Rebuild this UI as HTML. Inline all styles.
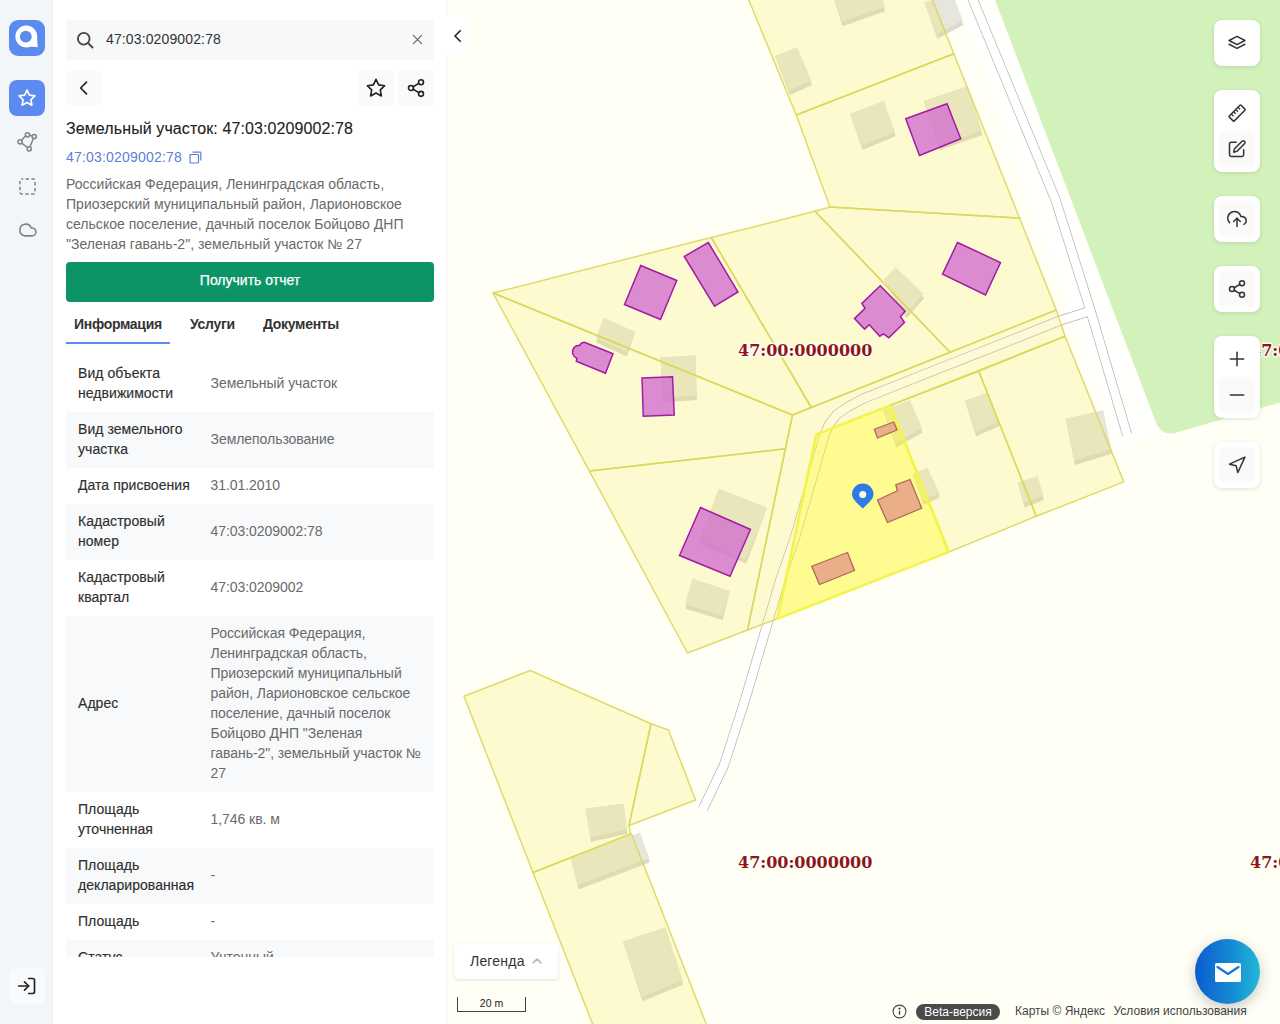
<!DOCTYPE html>
<html lang="ru">
<head>
<meta charset="utf-8">
<title>Земельный участок: 47:03:0209002:78</title>
<style>
*{box-sizing:border-box;margin:0;padding:0}
html,body{width:1280px;height:1024px;overflow:hidden;background:#fffff6;font-family:"Liberation Sans",sans-serif;color:#333}
#map{position:absolute;left:0;top:0;width:1280px;height:1024px;display:block}
#nav{position:absolute;left:0;top:0;width:53px;height:1024px;background:#f3f6f9;border-right:1px solid #ebeff4}
#panel{position:absolute;left:53px;top:0;width:393px;height:1024px;background:#fff;box-shadow:1px 0 2px rgba(0,0,0,.06)}
.abs{position:absolute}
.logo{left:9px;top:20px;width:36px;height:36px;border-radius:9px;background:#5b8bf0}
.navact{left:9px;top:80px;width:36px;height:36px;border-radius:8px;background:#5b8bf0}
.search{left:13px;top:20px;width:368px;height:40px;background:#f7f8fa;border-radius:3px}
.search span{position:absolute;left:40px;top:10px;font-size:14px;line-height:18px;color:#333;letter-spacing:.13px}
.sqbtn{width:36px;height:36px;background:#fafafa;border-radius:6px}
h1{position:absolute;left:13px;top:118px;font-size:16px;line-height:22px;font-weight:400;color:#222;white-space:nowrap;-webkit-text-stroke:.1px #222;letter-spacing:.1px}
.cn{left:13px;top:148px;font-size:14px;line-height:18px;color:#5c7fd6;white-space:nowrap;letter-spacing:.2px}
.addr{left:13px;top:173.6px;width:372px;font-size:14px;line-height:20px;color:#6a6a6a;white-space:nowrap;letter-spacing:.02px}
.btn{left:13px;top:262px;width:368px;height:39.5px;border-radius:4px;background:#0c9467;color:#fff;font-size:14px;line-height:37px;text-align:center;-webkit-text-stroke:.25px #fff}
.tabs{left:13px;top:306px;height:38px;white-space:nowrap}
.tab{position:absolute;top:9px;font-size:14px;line-height:18px;font-weight:700;color:#333;letter-spacing:-.3px}
.tabline{left:13px;top:342px;width:104px;height:2px;background:#5b8bf0}
#tbl{position:absolute;left:13px;top:356px;width:368px;height:601px;overflow:hidden}
.r{position:relative;width:368px}
.r.g{background:#f8f9fa}
.r .l{position:absolute;left:12px;font-size:14px;line-height:20px;color:#2f2f2f;white-space:nowrap;-webkit-text-stroke:.15px #2f2f2f;letter-spacing:.05px;margin-top:-.6px}
.r .v{position:absolute;left:144.5px;font-size:14px;line-height:20px;color:#6a6a6a;white-space:nowrap;letter-spacing:-.05px;margin-top:-.6px}
.h2{height:56px}.h1{height:36px}.h8{height:176px}
.collapse{left:446px;top:16px;width:23px;height:39px;background:#fff;border-radius:0 4px 4px 0}
</style>
</head>
<body>
<svg id="map" viewBox="0 0 1280 1024" width="1280" height="1024">
<style>
.pc{fill:#fae438;fill-opacity:.2;stroke:none}
.pl{fill:none;stroke:#dcd75c;stroke-opacity:.9;stroke-width:1.5;stroke-linejoin:round}
.sel{fill:#ffff00;fill-opacity:.3;stroke:#f3f54a;stroke-width:2.4;stroke-linejoin:round}
.mg{fill:#d271d0;fill-opacity:.8;stroke:#a21ba4;stroke-width:1.5;stroke-linejoin:miter}
.og{fill:#e8a888;fill-opacity:.92;stroke:#ae6656;stroke-width:1.3}
.bs{fill:#dadad0}
.bt{fill:#e6e6dc}
.rg{fill:none;stroke:#b3b4bb;stroke-width:10;stroke-linejoin:round}
.rw{fill:none;stroke:#fff;stroke-width:8.6;stroke-linejoin:round}
.rl{fill:none;stroke:#b4b5bb;stroke-width:.8;stroke-linejoin:round}
.lbl{font-family:"DejaVu Serif",serif;font-weight:700;font-size:16px;fill:#8c1717;stroke:#fff;stroke-opacity:.85;stroke-width:3px;paint-order:stroke;stroke-linejoin:round;letter-spacing:0}
</style>
<rect width="1280" height="1024" fill="#fffff6"/>
<polyline points="985,-10 1147,440" fill="none" stroke="#fffffc" stroke-width="60"/>
<path d="M991.2,-10 L1155.8,422 Q1161.5,436.9 1176.9,432.4 L1290,399.6 L1290,-10 Z" fill="#d3f1ba"/>
<polyline points="971,-5 1055.6,200 1090,309 1127.2,435" class="rg" />
<polyline points="1090,311 1061,320.25 940,368.1 863.75,398.4 848.5,406.5 836.25,415 829,424.5 824.5,435 810.5,483.5 795,537.5 780.3,580 762.6,640 745,700 724,765 702.8,809.4" class="rg" />
<polyline points="971,-5 1055.6,200 1090,309 1127.2,435 1127.8,437" class="rw" />
<polyline points="1090,311 1061,320.25 940,368.1 863.75,398.4 848.5,406.5 836.25,415 829,424.5 824.5,435 810.5,483.5 795,537.5 780.3,580 762.6,640 745,700 724,765 702.8,809.4 702.2,810.6" class="rw" />
<polygon points="832.5,-6 881.25,-6 885,11.25 842.5,26.25" class="bs" />
<polygon points="832.5,-6 881.25,-6 884.5,6.75 842,21.75" class="bt" />
<polygon points="775,56.25 797,47.5 812,85 790,95" class="bs" />
<polygon points="775,56.25 797,47.5 811.5,80.5 789.5,90.5" class="bt" />
<polygon points="924.5,2.5 952.5,-6 963.25,25 937.5,38.75" class="bs" />
<polygon points="924.5,2.5 952.5,-6 962.75,20.5 937,34.25" class="bt" />
<polygon points="850,113.75 883.75,101.25 895.5,136.25 862.5,150" class="bs" />
<polygon points="850,113.75 883.75,101.25 895,131.75 862,145.5" class="bt" />
<polygon points="923.75,101.25 967.5,86.25 982.5,135 940,150" class="bs" />
<polygon points="923.75,101.25 967.5,86.25 982,130.5 939.5,145.5" class="bt" />
<polygon points="603.75,318 635,332 627,356.5 596.25,342.5" class="bs" />
<polygon points="603.75,318 635,332 626.5,352 595.75,338" class="bt" />
<polygon points="660.5,357.5 695.5,355.5 697,400 663,402.5" class="bs" />
<polygon points="660.5,357.5 695.5,355.5 696.5,395.5 662.5,398" class="bt" />
<polygon points="884.1,279.5 895.9,267.8 924,298.3 906.4,318.6" class="bs" />
<polygon points="884.1,279.5 895.9,267.8 923.5,293.8 905.9,314.1" class="bt" />
<polygon points="883.1,410 910,400.6 922.5,432.5 896.25,447.5" class="bs" />
<polygon points="883.1,410 910,400.6 922,428 895.75,443" class="bt" />
<polygon points="965,401 987,393 999.5,426 976.25,436.25" class="bs" />
<polygon points="965,401 987,393 999,421.5 975.75,431.75" class="bt" />
<polygon points="912.5,473.75 927.5,468 940,497.5 923.75,505" class="bs" />
<polygon points="912.5,473.75 927.5,468 939.5,493 923.25,500.5" class="bt" />
<polygon points="1018,482.5 1037.5,476.25 1043.75,500 1024.4,507.5" class="bs" />
<polygon points="1018,482.5 1037.5,476.25 1043.25,495.5 1023.9,503" class="bt" />
<polygon points="1065.6,418.75 1103,410.6 1111.9,453.75 1075,465" class="bs" />
<polygon points="1065.6,418.75 1103,410.6 1111.4,449.25 1074.5,460.5" class="bt" />
<polygon points="718.75,488.75 767,508 746.25,563.75 700,543.75" class="bs" />
<polygon points="718.75,488.75 767,508 745.75,559.25 699.5,539.25" class="bt" />
<polygon points="692.5,578.75 730,591.25 722.5,620 685.5,608.75" class="bs" />
<polygon points="692.5,578.75 730,591.25 722,615.5 685,604.25" class="bt" />
<polygon points="585.5,808.75 623.5,803.75 627.25,833.75 591,842" class="bs" />
<polygon points="585.5,808.75 623.5,803.75 626.75,829.25 590.5,837.5" class="bt" />
<polygon points="571,858.75 639.75,832.5 649.75,862.5 578.5,889.5" class="bs" />
<polygon points="571,858.75 639.75,832.5 649.25,858 578,885" class="bt" />
<polygon points="623.1,941.5 665.4,927.6 683.3,984.4 642.4,1001.3" class="bs" />
<polygon points="623.1,941.5 665.4,927.6 682.8,979.9 641.9,996.8" class="bt" />
<polygon points="746.3,-6 930.1,-6 953.75,53.75 796.25,115" class="pc" />
<polygon points="796.25,115 953.75,53.75 1019.5,218 830,207" class="pc" />
<polygon points="815,211.25 830,207 1019.5,218 1056.25,310 950,352.3" class="pc" />
<polygon points="711.25,237.5 815,211.25 950,352.3 811.25,407.5" class="pc" />
<polygon points="493,293 711.25,237.5 811.25,407.5 792.5,415" class="pc" />
<polygon points="493,293 792.5,415 785.4,448.75 589.3,470.9" class="pc" />
<polygon points="589.3,470.9 785.4,448.75 747.5,630 687.5,653" class="pc" />
<polygon points="792.5,415 1056.25,310 1065,336.25 890,405.5 816.25,434.5 777.5,618.75 747.5,630" class="pc" />
<polygon points="890,405.5 978.75,371.25 1036.25,516.25 948.75,552" class="pc" />
<polygon points="978.75,371.25 1065,336.25 1123.75,481.9 1036.25,516.25" class="pc" />
<polygon points="464,696.25 530.25,670.5 651,723.75 629,825.5 630.5,834 533,872.5" class="pc" />
<polygon points="651,723.75 668.5,730 695.5,800 629,825.5" class="pc" />
<polygon points="533,872.5 631.5,834 712.5,1040 598.9,1040" class="pc" />
<polygon points="890,405.5 948.75,552 777.5,618.75 816.25,434.5" class="pc" />
<polygon points="890,405.5 948.75,552 777.5,618.75 816.25,434.5" class="sel" />
<polygon points="746.3,-6 930.1,-6 953.75,53.75 796.25,115" class="pl" />
<polygon points="796.25,115 953.75,53.75 1019.5,218 830,207" class="pl" />
<polygon points="815,211.25 830,207 1019.5,218 1056.25,310 950,352.3" class="pl" />
<polygon points="711.25,237.5 815,211.25 950,352.3 811.25,407.5" class="pl" />
<polygon points="493,293 711.25,237.5 811.25,407.5 792.5,415" class="pl" />
<polygon points="493,293 792.5,415 785.4,448.75 589.3,470.9" class="pl" />
<polygon points="589.3,470.9 785.4,448.75 747.5,630 687.5,653" class="pl" />
<polygon points="792.5,415 1056.25,310 1065,336.25 890,405.5 816.25,434.5 777.5,618.75 747.5,630" class="pl" />
<polygon points="890,405.5 978.75,371.25 1036.25,516.25 948.75,552" class="pl" />
<polygon points="978.75,371.25 1065,336.25 1123.75,481.9 1036.25,516.25" class="pl" />
<polygon points="464,696.25 530.25,670.5 651,723.75 629,825.5 630.5,834 533,872.5" class="pl" />
<polygon points="651,723.75 668.5,730 695.5,800 629,825.5" class="pl" />
<polygon points="533,872.5 631.5,834 712.5,1040 598.9,1040" class="pl" />
<polygon points="890,405.5 948.75,552 777.5,618.75 816.25,434.5" class="sel" style="fill:none"/>
<polygon points="640.75,265.5 676.75,280.5 660.5,319.5 624.5,304.5" class="mg" />
<polygon points="708.25,242.5 738,292 714.5,306.25 684.25,256.5" class="mg" />
<polygon points="642,378 672.5,376.75 674.25,415 643.25,416.25" class="mg" />
<polygon points="905.75,118.75 947,103.75 960.75,138.75 919.5,155.5" class="mg" />
<polygon points="957.5,242.5 1000.5,262.5 985.5,295 942.5,274.25" class="mg" />
<polygon points="700.5,507.5 750.5,529.5 730,576.25 679.5,555.5" class="mg" />
<polygon points="880.2,285.8 905.2,311.2 900.5,316.6 904.5,322.5 888.8,337.7 883.4,333.8 879.8,336.2 869.3,324.8 864.6,329.1 854.5,318.6 865,308.4 861.9,303.4" class="mg" />
<path d="M584.25,342.25 L613,353.75 L605.5,373.25 L576.25,361.25 L577,358.5 Q571.5,356 572.8,350 Q574.5,345 579.5,345.5 Q580.5,343 584.25,342.25 Z" class="mg"/>
<polygon points="874.25,429.25 893.75,422 897,430 877.5,438" class="og" />
<polygon points="877.5,500 897.5,490.75 895.75,485 910,479.5 921.75,508.25 887.5,522.5" class="og" />
<polygon points="811.75,566.25 847.5,552.5 854.5,570.5 819.5,584.5" class="og" />
<text x="738" y="355.6" class="lbl">47:00:0000000</text>
<text x="1250" y="355.6" class="lbl">47:00:0000000</text>
<text x="738" y="867.6" class="lbl">47:00:0000000</text>
<text x="1250" y="867.6" class="lbl">47:00:0000000</text>
<g transform="translate(862.75,494.5)"><path d="M0,14.3 C-3,10.5 -10.8,5.5 -10.8,-0.2 A10.8,10.8 0 1 1 10.8,-0.2 C10.8,5.5 3,10.5 0,14.3 Z" fill="#2f7be5"/><circle r="3.5" fill="#fffde0"/></g>
</svg>
<div id="nav">
  <div class="abs logo"><svg width="36" height="36" viewBox="0 0 36 36"><circle cx="17.3" cy="16.500" r="10.900" fill="#fff"/><path d="M27.800 14l.9 13.300-9.700-1z" fill="#fff"/><circle cx="16.800" cy="16.700" r="5.900" fill="#5b8bf0"/></svg></div>
  <div class="abs navact"><svg style="position:absolute;left:8px;top:8px" width="20" height="20" viewBox="0 0 24 24" fill="none" stroke="#fff" stroke-width="2" stroke-linejoin="round"><polygon points="12 2.500 14.900 8.600 21.500 9.500 16.700 14.100 17.900 20.700 12 17.500 6.100 20.700 7.300 14.100 2.500 9.500 9.100 8.600"/></svg></div>
  <svg class="abs" style="left:16px;top:131px" width="22" height="22" viewBox="0 0 22 22" fill="none" stroke="#7d828a" stroke-width="1.500"><circle cx="11.500" cy="3.800" r="2.100"/><circle cx="18.200" cy="5.500" r="2.100"/><circle cx="4" cy="10.800" r="2.100"/><circle cx="13.200" cy="17.800" r="2.100"/><path d="M9.600 4.800L5.600 9.300M13.500 4.300l2.700.7M17.400 7.500l-3.500 8.300M5.600 12.200l6 4.300"/></svg>
  <svg class="abs" style="left:19px;top:178px" width="17" height="17" viewBox="0 0 17 17" fill="none" stroke="#7d828a" stroke-width="1.500"><rect x="1" y="1" width="15" height="15" rx="1.500" stroke-dasharray="3.400 2.400" stroke-dashoffset="1.700"/></svg>
  <svg class="abs" style="left:17px;top:220px" width="20" height="20" viewBox="0 0 24 24" fill="none" stroke="#7d828a" stroke-width="1.900" stroke-linejoin="round"><path d="M18 10.500h-1A7 7 0 1 0 9.500 20H18a4.700 4.700 0 0 0 0-9.500z" transform="translate(0 -1)"/></svg>
  <div class="abs" style="left:9px;top:968px;width:36px;height:36px;border-radius:6px;background:#f8fafc"><svg style="position:absolute;left:8px;top:8px" width="20" height="20" viewBox="0 0 24 24" fill="none" stroke="#222" stroke-width="2" stroke-linecap="round" stroke-linejoin="round"><path d="M14 3h5a2 2 0 0 1 2 2v14a2 2 0 0 1-2 2h-5"/><polyline points="9 17 14 12 9 7"/><line x1="14" y1="12" x2="2" y2="12"/></svg></div>
</div>
<div id="panel">
  <div class="abs search"><svg style="position:absolute;left:9px;top:10px" width="20" height="20" viewBox="0 0 24 24" fill="none" stroke="#444" stroke-width="2.200" stroke-linecap="round"><circle cx="10.500" cy="10.500" r="7"/><line x1="21" y1="21" x2="15.700" y2="15.700"/></svg><span>47:03:0209002:78</span><svg style="position:absolute;left:345.5px;top:14px" width="11" height="11" viewBox="0 0 12 12" fill="none" stroke="#666" stroke-width="1.300" stroke-linecap="round"><path d="M1.500 1.500l9 9M10.500 1.500l-9 9"/></svg></div>
  <div class="abs sqbtn" style="left:13px;top:70px"><svg style="position:absolute;left:8px;top:8px" width="20" height="20" viewBox="0 0 24 24" fill="none" stroke="#222" stroke-width="2" stroke-linecap="round" stroke-linejoin="round"><polyline points="15 19 8 12 15 5"/></svg></div>
  <div class="abs sqbtn" style="left:305px;top:70px"><svg style="position:absolute;left:7px;top:7px" width="22" height="22" viewBox="0 0 24 24" fill="none" stroke="#222" stroke-width="1.800" stroke-linejoin="round"><polygon points="12 2.500 14.900 8.600 21.500 9.500 16.700 14.100 17.900 20.700 12 17.500 6.100 20.700 7.300 14.100 2.500 9.500 9.100 8.600"/></svg></div>
  <div class="abs sqbtn" style="left:345px;top:70px"><svg style="position:absolute;left:8px;top:8px" width="20" height="20" viewBox="0 0 24 24" fill="none" stroke="#222" stroke-width="1.900" stroke-linecap="round"><circle cx="18" cy="5" r="3"/><circle cx="6" cy="12" r="3"/><circle cx="18" cy="19" r="3"/><line x1="8.600" y1="13.500" x2="15.400" y2="17.500"/><line x1="15.400" y1="6.500" x2="8.600" y2="10.500"/></svg></div>
  <svg class="abs" style="left:136px;top:151px" width="13" height="13" viewBox="0 0 13 13" fill="none" stroke="#5c7fd6" stroke-width="1.200" stroke-linejoin="round"><rect x="1" y="3.500" width="8.500" height="8.500" rx=".8"/><path d="M3.500 1.200h7.500a.8.800 0 0 1 .8.800v7.500"/></svg>
  <h1>Земельный участок: 47:03:0209002:78</h1>
  <div class="abs cn">47:03:0209002:78</div>
  <div class="abs addr">Российская Федерация, Ленинградская область,<br>Приозерский муниципальный район, Ларионовское<br>сельское поселение, дачный поселок Бойцово ДНП<br>"Зеленая гавань-2", земельный участок № 27</div>
  <div class="abs btn">Получить отчет</div>
  <div class="abs tabs">
    <span class="tab" style="left:8px">Информация</span>
    <span class="tab" style="left:124px">Услуги</span>
    <span class="tab" style="left:197px">Документы</span>
  </div>
  <div class="abs tabline"></div>
  <div id="tbl">
    <div class="r h2"><div class="l" style="top:8px">Вид объекта<br>недвижимости</div><div class="v" style="top:18px">Земельный участок</div></div>
    <div class="r h2 g"><div class="l" style="top:8px">Вид земельного<br>участка</div><div class="v" style="top:18px">Землепользование</div></div>
    <div class="r h1"><div class="l" style="top:8px">Дата присвоения</div><div class="v" style="top:8px">31.01.2010</div></div>
    <div class="r h2 g"><div class="l" style="top:8px">Кадастровый<br>номер</div><div class="v" style="top:18px">47:03:0209002:78</div></div>
    <div class="r h2"><div class="l" style="top:8px">Кадастровый<br>квартал</div><div class="v" style="top:18px">47:03:0209002</div></div>
    <div class="r h8 g"><div class="l" style="top:78px">Адрес</div><div class="v" style="top:8px">Российская Федерация,<br>Ленинградская область,<br>Приозерский муниципальный<br>район, Ларионовское сельское<br>поселение, дачный поселок<br>Бойцово ДНП "Зеленая<br>гавань-2", земельный участок №<br>27</div></div>
    <div class="r h2"><div class="l" style="top:8px">Площадь<br>уточненная</div><div class="v" style="top:18px">1,746 кв. м</div></div>
    <div class="r h2 g"><div class="l" style="top:8px">Площадь<br>декларированная</div><div class="v" style="top:18px">-</div></div>
    <div class="r h1"><div class="l" style="top:8px">Площадь</div><div class="v" style="top:8px">-</div></div>
    <div class="r h1 g"><div class="l" style="top:8px">Статус</div><div class="v" style="top:8px">Учтенный</div></div>
  </div>
</div>
<div class="abs collapse"><svg style="position:absolute;left:2.5px;top:11px" width="18" height="18" viewBox="0 0 24 24" fill="none" stroke="#222" stroke-width="2.200" stroke-linecap="round" stroke-linejoin="round"><polyline points="15 19 8 12 15 5"/></svg></div>
<style>
.mb{position:absolute;left:1214px;width:46px;background:#fff;border-radius:8px;box-shadow:0 1px 4px rgba(0,0,0,.12);padding:5px}
.mb i{display:block;width:36px;height:36px;border-radius:6px;background:#fafafa;position:relative}
.mb svg{position:absolute;left:8px;top:8px;width:20px;height:20px;fill:none;stroke:#333;stroke-width:1.8;stroke-linecap:round;stroke-linejoin:round}
.legend{position:absolute;left:454px;top:944px;width:104px;height:35px;background:#fff;border-radius:4px;box-shadow:0 1px 3px rgba(0,0,0,.12);font-size:14px;line-height:35px;color:#333;padding-left:16px;letter-spacing:.2px}
.scale{position:absolute;left:457px;top:997px;width:69px;height:15px;border:1px solid #444;border-top:none;font-size:10.5px;line-height:13px;text-align:center;color:#222}
.att{position:absolute;top:1003px;font-size:12px;line-height:16px;color:#444;white-space:nowrap}
.beta{position:absolute;left:916px;top:1003.5px;width:84px;height:16.5px;border-radius:8px;background:#4a4a4a;color:#fff;font-size:12px;line-height:16px;text-align:center}
.fab{position:absolute;left:1195px;top:938.5px;width:65px;height:65px;border-radius:50%;background:linear-gradient(90deg,#0b5cd0 0%,#1689d3 55%,#22b8d8 100%);box-shadow:0 4px 14px rgba(0,0,0,.22)}
</style>
<div class="mb" style="top:20px"><i style="background:#fff"><svg viewBox="0 0 24 24"><polygon points="12 4 2.5 9 12 14 21.5 9 12 4"/><polyline points="2.5 13.5 12 18.5 21.5 13.5"/></svg></i></div>
<div class="mb" style="top:90px"><i style="background:#fff"><svg viewBox="0 0 24 24"><g transform="rotate(-45 12 12)"><rect x="2" y="8" width="20" height="8.4" rx="1"/><path d="M6.300 8v3M10.100 8v3M13.900 8v3M17.700 8v3" stroke-width="1.500"/></g></svg></i><i><svg viewBox="0 0 24 24"><path d="M11 4H5a2 2 0 0 0-2 2v13a2 2 0 0 0 2 2h13a2 2 0 0 0 2-2v-6"/><path d="M18 2.800a2 2 0 0 1 3 3L12 14.800l-4 1 1-4 9-9z"/></svg></i></div>
<div class="mb" style="top:196px"><i><svg viewBox="0 0 24 24"><polyline points="16 15 12 11 8 15"/><line x1="12" y1="11" x2="12" y2="21"/><path d="M20.4 18.4A5 5 0 0 0 18 9h-1.3A8 8 0 1 0 3 16.3"/></svg></i></div>
<div class="mb" style="top:266px"><i><svg viewBox="0 0 24 24"><circle cx="18" cy="5" r="3"/><circle cx="6" cy="12" r="3"/><circle cx="18" cy="19" r="3"/><line x1="8.6" y1="13.5" x2="15.4" y2="17.5"/><line x1="15.4" y1="6.5" x2="8.6" y2="10.5"/></svg></i></div>
<div class="mb" style="top:336px"><i style="background:#fff"><svg viewBox="0 0 24 24"><line x1="12" y1="4" x2="12" y2="20"/><line x1="4" y1="12" x2="20" y2="12"/></svg></i><i><svg viewBox="0 0 24 24"><line x1="4" y1="12" x2="20" y2="12"/></svg></i></div>
<div class="mb" style="top:442px"><i><svg viewBox="0 0 24 24"><polygon points="3 11 21.5 2.5 13 21 11 13 3 11"/></svg></i></div>
<div class="legend">Легенда<svg style="position:absolute;left:77px;top:13px" width="12" height="8" viewBox="0 0 12 8" fill="none" stroke="#b5b5b5" stroke-width="1.6" stroke-linecap="round" stroke-linejoin="round"><polyline points="2 6 6 2 10 6"/></svg></div>
<div class="scale">20 m</div>
<svg style="position:absolute;left:892px;top:1004px" width="15" height="15" viewBox="0 0 15 15" fill="none" stroke="#444" stroke-width="1.1"><circle cx="7.5" cy="7.5" r="6.4"/><line x1="7.5" y1="6.8" x2="7.5" y2="10.8" stroke-width="1.4"/><circle cx="7.5" cy="4.6" r=".6" fill="#444"/></svg>
<div class="beta">Beta-версия</div>
<div class="att" style="left:1015px">Карты © Яндекс</div>
<div class="att" style="left:1113.5px">Условия использования</div>
<div class="fab"><svg style="position:absolute;left:20px;top:24px" width="26" height="19" viewBox="0 0 26 19"><rect width="26" height="19" rx="1.5" fill="#fff"/><polyline points="2.5 4 13 11 23.5 4" fill="none" stroke="#1478d0" stroke-width="2.2" stroke-linecap="round" stroke-linejoin="round"/></svg></div>

</body>
</html>
